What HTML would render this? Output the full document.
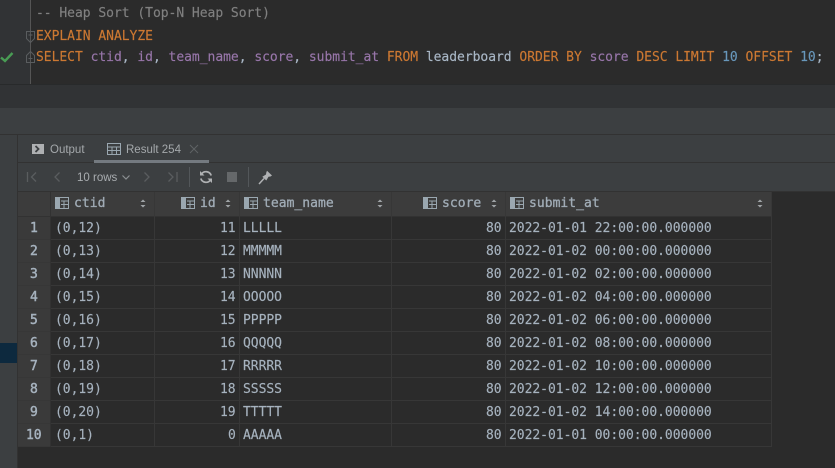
<!DOCTYPE html>
<html><head><meta charset="utf-8">
<style>
html,body{margin:0;padding:0;background:#3c3f41}
#p{position:relative;width:835px;height:468px;overflow:hidden;background:#3c3f41}
#p div,#p span.a,#p svg{position:absolute}
.m{font-family:"DejaVu Sans Mono","Liberation Mono",monospace;font-size:13px;letter-spacing:-.03px;white-space:pre;line-height:18px;height:18px;-webkit-text-stroke:.15px currentColor}
.s{font-family:"Liberation Sans",sans-serif;font-size:11.5px;color:#a4a8ab;white-space:pre;line-height:16px;margin-top:1px}
.k{color:#cc7832}.f{color:#9876aa}.n{color:#6897bb}.w{color:#a9b7c6}
.h{color:#a1acb6;letter-spacing:.03px;margin-top:1px;-webkit-text-stroke:.3px currentColor}
.c{color:#a6b2be;margin-top:1px}
.b{-webkit-text-stroke:.45px currentColor}
</style></head><body><div id="p">

<!-- editor -->
<div style="left:0;top:0;width:835px;height:84px;background:#2b2b2b"></div>
<div style="left:0;top:0;width:30px;height:84px;background:#313335"></div>
<div style="left:30px;top:0;width:1px;height:84px;background:#555"></div>
<div style="left:0;top:84px;width:835px;height:1px;background:#282a2b"></div>
<div style="left:0;top:85px;width:835px;height:23px;background:#313335"></div>

<div class="m" style="left:36px;top:5px;color:#808080">-- Heap Sort (Top-N Heap Sort)</div>
<div class="m k" style="left:36px;top:28px">EXPLAIN ANALYZE</div>
<div class="m k" style="left:36px;top:49px">SELECT <span class="f">ctid</span><span class="w">,</span> <span class="f">id</span><span class="w">,</span> <span class="f">team_name</span><span class="w">,</span> <span class="f">score</span><span class="w">,</span> <span class="f">submit_at</span> FROM <span class="w">leaderboard</span> ORDER BY <span class="f">score</span> DESC LIMIT <span class="n">10</span> OFFSET <span class="n">10</span><span class="w">;</span></div>

<svg style="left:0;top:51px" width="14" height="12" viewBox="0 0 14 12"><path d="M1 6.500L5 10L12.500 2" fill="none" stroke="#499c54" stroke-width="2.400"/></svg>
<svg style="left:26px;top:31px" width="10" height="13" viewBox="0 0 10 13"><path d="M.5.5H8.500V7.500L4.500 11.500L.5 7.500Z M2.500 4H6.500" fill="none" stroke="#5a5d5f"/></svg>
<svg style="left:26px;top:50px" width="10" height="13" viewBox="0 0 10 13"><path d="M.5 12.500H8.500V5.500L4.500 1.500L.5 5.500Z M2.500 8.500H6.500" fill="none" stroke="#5a5d5f"/></svg>

<!-- panel lines -->
<div style="left:0;top:134px;width:835px;height:1px;background:#323232"></div>
<div style="left:17px;top:135px;width:1px;height:333px;background:#323232"></div>
<div style="left:18px;top:162px;width:817px;height:1px;background:#323232"></div>
<div style="left:0;top:343px;width:17px;height:20px;background:#0d293e"></div>

<!-- tabs -->
<svg style="left:32px;top:144px" width="12" height="10" viewBox="0 0 12 10"><rect width="12" height="10" fill="#aeb0b2"/><path d="M3.500 2L6.500 5L3.500 8" fill="none" stroke="#3c3f41" stroke-width="1.800"/></svg>
<div class="s" style="left:50px;top:141px">Output</div>
<svg style="left:107px;top:143px" width="14" height="12" viewBox="0 0 14 12"><path d="M.5.5H13.500V11.500H.5Z M.5 4H13.500M.5 7.500H13.500M5 4V11.500M9.500 4V11.500" fill="none" stroke="#9aa7b0"/></svg>
<div class="s" style="left:126px;top:141px">Result 254</div>
<svg style="left:189px;top:144px" width="10" height="10" viewBox="0 0 10 10"><path d="M1 1L9 9M9 1L1 9" stroke="#5f6365" stroke-width="1"/></svg>
<div style="left:94px;top:160px;width:115px;height:3px;background:#747a80"></div>

<!-- toolbar -->
<svg style="left:26px;top:171px" width="12" height="12" viewBox="0 0 12 12"><path d="M1.500 1V11M10 1.500L5.500 6L10 10.500" fill="none" stroke="#5a5d5f" stroke-width="1.300"/></svg>
<svg style="left:52px;top:171px" width="10" height="12" viewBox="0 0 10 12"><path d="M7.500 1.500L3 6L7.500 10.500" fill="none" stroke="#5a5d5f" stroke-width="1.300"/></svg>
<div class="s" style="left:77px;top:169px;color:#a9adb0">10 rows</div>
<svg style="left:121px;top:174px" width="10" height="7" viewBox="0 0 10 7"><path d="M1.500 1.500L5 5L8.500 1.500" fill="none" stroke="#8a8e91" stroke-width="1.200"/></svg>
<svg style="left:142px;top:171px" width="10" height="12" viewBox="0 0 10 12"><path d="M2.500 1.500L7 6L2.500 10.500" fill="none" stroke="#5a5d5f" stroke-width="1.300"/></svg>
<svg style="left:167px;top:171px" width="12" height="12" viewBox="0 0 12 12"><path d="M1.500 1.500L6 6L1.500 10.500M10 1V11" fill="none" stroke="#5a5d5f" stroke-width="1.300"/></svg>
<div style="left:189px;top:167px;width:1px;height:20px;background:#53575a"></div>
<svg style="left:199px;top:170px" width="14" height="14" viewBox="0 0 14 14"><path d="M12.200 5.500A5.500 5.500 0 0 0 2.500 4M1.800 8.500A5.500 5.500 0 0 0 11.500 10" fill="none" stroke="#afb1b3" stroke-width="1.700"/><path d="M1 1V5.500H5.500ZM13 13V8.500H8.500Z" fill="#afb1b3"/></svg>
<div style="left:227px;top:172px;width:10px;height:10px;background:#65686a"></div>
<div style="left:248px;top:167px;width:1px;height:20px;background:#53575a"></div>
<svg style="left:258px;top:170px" width="15" height="15" viewBox="0 0 15 15"><path d="M9 .8L14 5.500L12.500 6.500L10.500 6.800L8.300 10.500L4.300 6.800L8 4.500L8.300 2.500Z" fill="#afb1b3"/><path d="M6 8.500L1 14" stroke="#afb1b3" stroke-width="1.500"/></svg>

<!-- table backdrop -->
<div style="left:18px;top:191px;width:817px;height:277px;background:#2b2b2b"></div>
<div style="left:18px;top:191px;width:817px;height:1px;background:#323232"></div>
<div style="left:18px;top:192px;width:754px;height:25px;background:#3c3c3c"></div>
<div style="left:18px;top:217px;width:33px;height:230px;background:#3a3a3a"></div>

<!-- horizontal grid -->
<div style="left:18px;top:216px;width:754px;height:1px;background:#323232"></div>
<div style="left:18px;top:239px;width:754px;height:1px;background:#373737"></div>
<div style="left:18px;top:262px;width:754px;height:1px;background:#373737"></div>
<div style="left:18px;top:285px;width:754px;height:1px;background:#373737"></div>
<div style="left:18px;top:308px;width:754px;height:1px;background:#373737"></div>
<div style="left:18px;top:331px;width:754px;height:1px;background:#373737"></div>
<div style="left:18px;top:354px;width:754px;height:1px;background:#373737"></div>
<div style="left:18px;top:377px;width:754px;height:1px;background:#373737"></div>
<div style="left:18px;top:400px;width:754px;height:1px;background:#373737"></div>
<div style="left:18px;top:423px;width:754px;height:1px;background:#373737"></div>
<div style="left:18px;top:446px;width:754px;height:1px;background:#373737"></div>

<!-- vertical grid -->
<div style="left:50px;top:192px;width:1px;height:255px;background:#323232"></div>
<div style="left:154px;top:192px;width:1px;height:255px;background:#373737"></div>
<div style="left:239px;top:192px;width:1px;height:255px;background:#373737"></div>
<div style="left:391px;top:192px;width:1px;height:255px;background:#373737"></div>
<div style="left:505px;top:192px;width:1px;height:255px;background:#373737"></div>
<div style="left:771px;top:192px;width:1px;height:255px;background:#373737"></div>

<!-- header icons -->
<svg style="left:55px;top:197px" width="14" height="12" viewBox="0 0 14 12"><path d="M0 0H5V12H0Z" fill="#9aa7b0"/><path d="M5 .5H13.500V11.500H5M6 4H13M6 7.500H13M9 4V11" fill="none" stroke="#9aa7b0"/></svg>
<svg style="left:181px;top:197px" width="14" height="12" viewBox="0 0 14 12"><path d="M0 0H5V12H0Z" fill="#9aa7b0"/><path d="M5 .5H13.500V11.500H5M6 4H13M6 7.500H13M9 4V11" fill="none" stroke="#9aa7b0"/></svg>
<svg style="left:244px;top:197px" width="14" height="12" viewBox="0 0 14 12"><path d="M0 0H5V12H0Z" fill="#9aa7b0"/><path d="M5 .5H13.500V11.500H5M6 4H13M6 7.500H13M9 4V11" fill="none" stroke="#9aa7b0"/></svg>
<svg style="left:423px;top:197px" width="14" height="12" viewBox="0 0 14 12"><path d="M0 0H5V12H0Z" fill="#9aa7b0"/><path d="M5 .5H13.500V11.500H5M6 4H13M6 7.500H13M9 4V11" fill="none" stroke="#9aa7b0"/></svg>
<svg style="left:510px;top:197px" width="14" height="12" viewBox="0 0 14 12"><path d="M0 0H5V12H0Z" fill="#9aa7b0"/><path d="M5 .5H13.500V11.500H5M6 4H13M6 7.500H13M9 4V11" fill="none" stroke="#9aa7b0"/></svg>

<!-- header text -->
<div class="m h" style="left:74px;top:194px">ctid</div>
<div class="m h" style="left:200px;top:194px">id</div>
<div class="m h" style="left:263px;top:194px">team_name</div>
<div class="m h" style="left:442px;top:194px">score</div>
<div class="m h" style="left:529px;top:194px">submit_at</div>

<!-- sort arrows -->
<svg style="left:140px;top:199px" width="6" height="9" viewBox="0 0 6 9"><path d="M3 .5L5.500 3H.5ZM3 8.500L.5 6H5.500Z" fill="#a0a4a7"/></svg>
<svg style="left:225px;top:199px" width="6" height="9" viewBox="0 0 6 9"><path d="M3 .5L5.500 3H.5ZM3 8.500L.5 6H5.500Z" fill="#a0a4a7"/></svg>
<svg style="left:377px;top:199px" width="6" height="9" viewBox="0 0 6 9"><path d="M3 .5L5.500 3H.5ZM3 8.500L.5 6H5.500Z" fill="#a0a4a7"/></svg>
<svg style="left:491px;top:199px" width="6" height="9" viewBox="0 0 6 9"><path d="M3 .5L5.500 3H.5ZM3 8.500L.5 6H5.500Z" fill="#a0a4a7"/></svg>
<svg style="left:757px;top:199px" width="6" height="9" viewBox="0 0 6 9"><path d="M3 .5L5.500 3H.5ZM3 8.500L.5 6H5.500Z" fill="#a0a4a7"/></svg>

<!-- row numbers -->
<div class="m c b" style="left:30px;top:219px">1</div>
<div class="m c b" style="left:30px;top:242px">2</div>
<div class="m c b" style="left:30px;top:265px">3</div>
<div class="m c b" style="left:30px;top:288px">4</div>
<div class="m c b" style="left:30px;top:311px">5</div>
<div class="m c b" style="left:30px;top:334px">6</div>
<div class="m c b" style="left:30px;top:357px">7</div>
<div class="m c b" style="left:30px;top:380px">8</div>
<div class="m c b" style="left:30px;top:403px">9</div>
<div class="m c b" style="left:26px;top:426px">10</div>

<!-- ctid -->
<div class="m c" style="left:55px;top:219px">(0,12)</div>
<div class="m c" style="left:55px;top:242px">(0,13)</div>
<div class="m c" style="left:55px;top:265px">(0,14)</div>
<div class="m c" style="left:55px;top:288px">(0,15)</div>
<div class="m c" style="left:55px;top:311px">(0,16)</div>
<div class="m c" style="left:55px;top:334px">(0,17)</div>
<div class="m c" style="left:55px;top:357px">(0,18)</div>
<div class="m c" style="left:55px;top:380px">(0,19)</div>
<div class="m c" style="left:55px;top:403px">(0,20)</div>
<div class="m c" style="left:55px;top:426px">(0,1)</div>

<!-- id -->
<div class="m c" style="left:220px;top:219px">11</div>
<div class="m c" style="left:220px;top:242px">12</div>
<div class="m c" style="left:220px;top:265px">13</div>
<div class="m c" style="left:220px;top:288px">14</div>
<div class="m c" style="left:220px;top:311px">15</div>
<div class="m c" style="left:220px;top:334px">16</div>
<div class="m c" style="left:220px;top:357px">17</div>
<div class="m c" style="left:220px;top:380px">18</div>
<div class="m c" style="left:220px;top:403px">19</div>
<div class="m c" style="left:228px;top:426px">0</div>

<!-- team_name -->
<div class="m c" style="left:243px;top:219px">LLLLL</div>
<div class="m c" style="left:243px;top:242px">MMMMM</div>
<div class="m c" style="left:243px;top:265px">NNNNN</div>
<div class="m c" style="left:243px;top:288px">OOOOO</div>
<div class="m c" style="left:243px;top:311px">PPPPP</div>
<div class="m c" style="left:243px;top:334px">QQQQQ</div>
<div class="m c" style="left:243px;top:357px">RRRRR</div>
<div class="m c" style="left:243px;top:380px">SSSSS</div>
<div class="m c" style="left:243px;top:403px">TTTTT</div>
<div class="m c" style="left:243px;top:426px">AAAAA</div>

<!-- score -->
<div class="m c" style="left:486px;top:219px">80</div>
<div class="m c" style="left:486px;top:242px">80</div>
<div class="m c" style="left:486px;top:265px">80</div>
<div class="m c" style="left:486px;top:288px">80</div>
<div class="m c" style="left:486px;top:311px">80</div>
<div class="m c" style="left:486px;top:334px">80</div>
<div class="m c" style="left:486px;top:357px">80</div>
<div class="m c" style="left:486px;top:380px">80</div>
<div class="m c" style="left:486px;top:403px">80</div>
<div class="m c" style="left:486px;top:426px">80</div>

<!-- submit_at -->
<div class="m c" style="left:509px;top:219px">2022-01-01 22:00:00.000000</div>
<div class="m c" style="left:509px;top:242px">2022-01-02 00:00:00.000000</div>
<div class="m c" style="left:509px;top:265px">2022-01-02 02:00:00.000000</div>
<div class="m c" style="left:509px;top:288px">2022-01-02 04:00:00.000000</div>
<div class="m c" style="left:509px;top:311px">2022-01-02 06:00:00.000000</div>
<div class="m c" style="left:509px;top:334px">2022-01-02 08:00:00.000000</div>
<div class="m c" style="left:509px;top:357px">2022-01-02 10:00:00.000000</div>
<div class="m c" style="left:509px;top:380px">2022-01-02 12:00:00.000000</div>
<div class="m c" style="left:509px;top:403px">2022-01-02 14:00:00.000000</div>
<div class="m c" style="left:509px;top:426px">2022-01-01 00:00:00.000000</div>

</div></body></html>
